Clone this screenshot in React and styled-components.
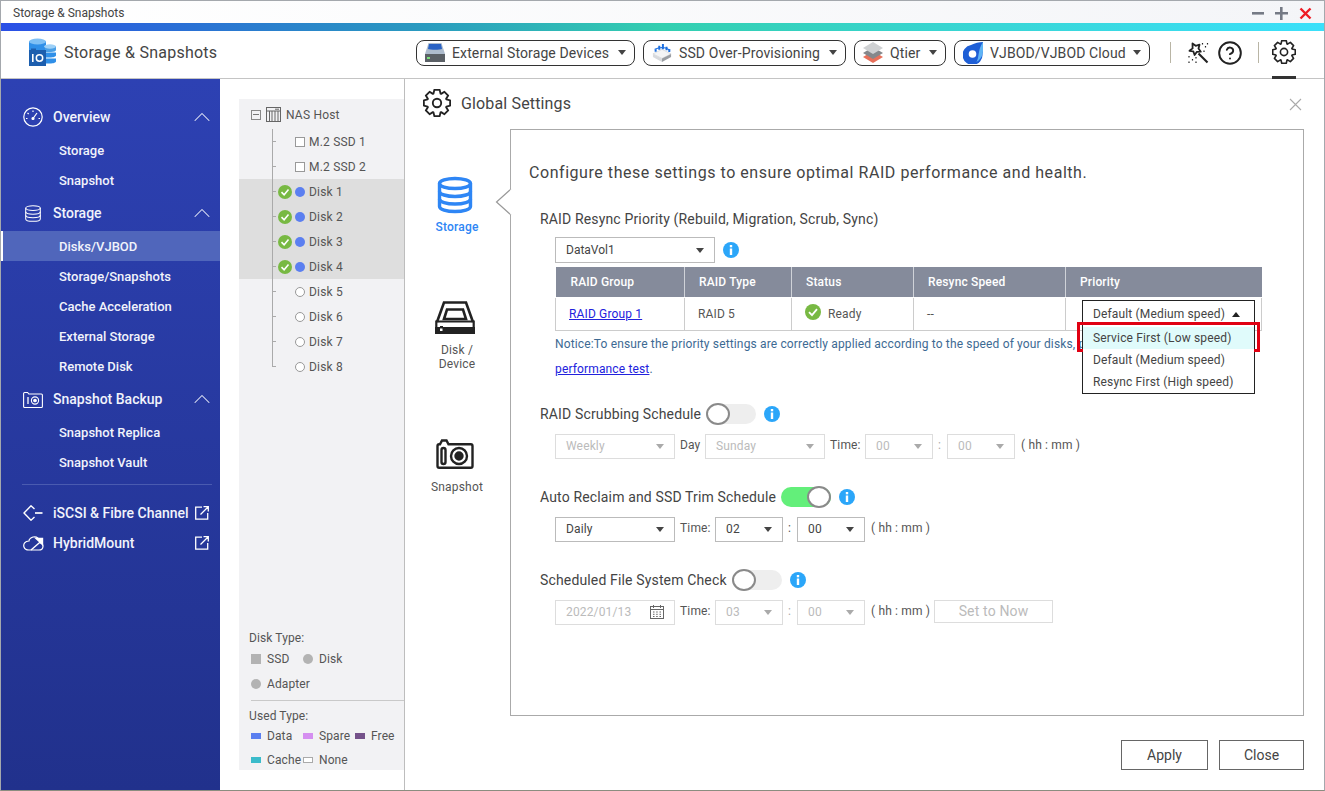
import React from 'react';
import styled, { createGlobalStyle } from 'styled-components';
import { CircleHelp, ChevronUp } from 'lucide-react';

const GlobalStyle = createGlobalStyle`
  html, body { margin: 0; padding: 0; background: #fff; }
  body { font-family: Roboto, "Liberation Sans", sans-serif; color: #333; }
  * { box-sizing: border-box; }
`;

// 8 tooth gear outline, same shape everywhere
const gearPoints = (() => {
  const pts = [];
  for (let i = 0; i < 8; i++) {
    const a = (i * Math.PI) / 4 - Math.PI / 2;
    [[-0.36, 8.6], [-0.2, 11.5], [0.2, 11.5], [0.36, 8.6]].forEach(([d, r]) => {
      pts.push(`${(12 + r * Math.cos(a + d)).toFixed(2)},${(12 + r * Math.sin(a + d)).toFixed(2)}`);
    });
  }
  return pts.join(' ');
})();

const Gear = ({ size, sw = 1.6 }) => (
  <svg width={size} height={size} viewBox="0 0 24 24" fill="none" stroke="#222" strokeWidth={sw} strokeLinejoin="round">
    <polygon points={gearPoints} />
    <circle cx="12" cy="12" r="3.6" />
  </svg>
);

const Logo = () => (
  <svg width="29" height="29" viewBox="0 0 29 29">
    <rect x="1" y="3" width="17" height="11" fill="#2f8fe8" />
    <ellipse cx="9.5" cy="3.5" rx="8.5" ry="3" fill="#7fc0f5" />
    <path d="M17 8h11v4c0 1-2 2-5 2h-6z" fill="#4a9fe6" />
    <path d="M17 14.5h11v3c0 1-3 2-6 2h-5z" fill="#2f8fe8" />
    <path d="M17 20.5h11v3c0 1-3 2-6 2h-5z" fill="#2f8fe8" />
    <ellipse cx="22" cy="8.5" rx="6" ry="2.2" fill="#9dd0f7" />
    <rect x="1" y="12" width="17" height="16" fill="#1c5eae" />
    <rect x="3" y="10.5" width="5" height="2" fill="#1c5eae" />
    <rect x="4" y="16" width="1.6" height="8" fill="#fff" />
    <circle cx="11.5" cy="20" r="3.2" fill="none" stroke="#fff" strokeWidth="1.5" />
  </svg>
);

const DriveIcon = () => (
  <svg width="20" height="19" viewBox="0 0 20 19">
    <path d="M3.500 0h13L20 11v8H0v-8z" fill="#aebccd" />
    <path d="M4 1h12l1 5c-2 1-12 1-14 0z" fill="#2a62c4" />
    <path d="M0 11h20v8H0z" fill="#5b6066" />
    <rect x="2" y="14" width="3" height="2" fill="#7be07b" />
  </svg>
);

const SsdIcon = () => (
  <svg width="20" height="20" viewBox="0 0 22 20">
    <path d="M1 11l10-5 10 5-10 5z" fill="#f4f5f6" stroke="#c5c8cc" strokeWidth=".6" />
    <path d="M1 11v3.500L11 20v-4z" fill="#d8dadd" />
    <path d="M21 11v3.500L11 20v-4z" fill="#9a9ea3" />
    <path d="M4 8.500V6M8 6.500V2M12 6V0M16 7V3M19 9V6" stroke="#1d6fe0" strokeWidth="2.200" />
    <path d="M3 6l4-1.500L11 4l4 .5L20 7" stroke="#1d6fe0" strokeWidth="1.200" fill="none" />
  </svg>
);

const TierIcon = () => (
  <svg width="20" height="21" viewBox="0 0 20 21">
    <path d="M10 9l10 6-10 6-10-6z" fill="#e8705a" />
    <path d="M10 5l10 6-10 6-10-6z" fill="#85888c" />
    <path d="M10 0l10 6-10 6L0 6z" fill="#cfd1d3" />
  </svg>
);

const CloudDiskIcon = () => (
  <svg width="20" height="22" viewBox="0 0 20 22">
    <path d="M20 0c0 4 .5 8-.5 12A10 10 0 1 1 8 3c4-2 8-3 12-3z" fill="#1f5fd6" />
    <path d="M20 0c0 4 .5 8-.5 12-.8 3.500-3 6-6 8 3-5 1-12 6.500-20z" fill="#5fb4f5" />
    <circle cx="9.500" cy="12" r="3.800" fill="#fff" />
  </svg>
);

const WandIcon = () => (
  <svg width="22" height="22" viewBox="0 0 22 22" fill="none" stroke="#222" strokeWidth="1.800" strokeLinejoin="round">
    <path d="M5.500 1.500l3.200 2.300 3.800-1.100-1 3.800 2.300 3.200-3.900.1-2.300 3.200-1.300-3.700L2.500 8.800l3.100-2.400z" />
    <path d="M11.500 11.500l9 9" strokeWidth="2.100" />
    <path d="M15.500 1v1.500M18.500 4v1.500M20.500 1v1.500M17 8.500V10M2 14v1.500M5.500 17v1.500M9 15v1.500M2 19.500V21M9 19.500V21" strokeWidth="1.200" />
  </svg>
);

const GaugeIcon = () => (
  <svg width="20" height="20" viewBox="0 0 20 20" fill="none" stroke="#fff" strokeWidth="1.2">
    <circle cx="10" cy="10" r="9.200" />
    <path d="M10 11.500L14 6M10 3.500v1.500M4.500 6l1.200 1M3 11.500h1.500M15.500 11.500H17" />
    <circle cx="10" cy="11.500" r="1" fill="#fff" />
  </svg>
);

const DbIcon = ({ w, h, color = '#fff', sw = 1.2 }) => (
  <svg width={w} height={h} viewBox="0 0 20 20" fill="none" stroke={color} strokeWidth={sw}>
    <ellipse cx="10" cy="3.600" rx="8.600" ry="2.800" />
    <path d="M1.400 3.600v12.800c0 1.600 3.900 2.800 8.600 2.800s8.600-1.200 8.600-2.800V3.600" />
    <path d="M1.400 8c0 1.600 3.900 2.800 8.600 2.800S18.600 9.600 18.600 8M1.400 12.200c0 1.600 3.900 2.800 8.600 2.800s8.600-1.200 8.600-2.800" />
  </svg>
);

const BackupIcon = () => (
  <svg width="20" height="17" viewBox="0 0 20 17" fill="none" stroke="#fff" strokeWidth="1.100">
    <path d="M.6 15.500V2.500c0-.6.400-1 1-1h3l1.200 1.500h12.600c.6 0 1 .4 1 1v11.500c0 .6-.4 1-1 1H1.600c-.6 0-1-.4-1-1z" />
    <path d="M5 6v7" strokeWidth="1.300" />
    <circle cx="12" cy="9.500" r="3.600" />
    <circle cx="12" cy="9.500" r="1.300" fill="#fff" />
  </svg>
);

const IscsiIcon = () => (
  <svg width="20" height="16" viewBox="0 0 20 16" fill="none" stroke="#fff" strokeWidth="1.400">
    <path d="M11.500 4L8 .8 1 8l7 7.200 3.500-3.200" />
    <path d="M12 8h7.500" strokeWidth="1.700" />
  </svg>
);

const CloudIcon = () => (
  <svg width="21" height="16" viewBox="0 0 21 16" fill="none" stroke="#fff" strokeWidth="1.200">
    <path d="M6 15h10c5 0 5-6 1.500-7C17 4 14 1 10 2 7 3 6 5 6 6 2 6 0 9 1 12c.6 2 2.500 3 5 3z" />
    <path d="M8 15l11-9.500M13 3.500l6.500 0v6z" fill="#fff" strokeWidth="1.400" />
  </svg>
);

const OpenIcon = () => (
  <svg width="14" height="14" viewBox="0 0 14 14" fill="none" stroke="#fff" strokeWidth="1.300">
    <path d="M7 1.200H.7v12h12V7M5.500 8.500L13 1M8.500.7h4.800v4.800" />
  </svg>
);

const DiskBig = () => (
  <svg width="40" height="33" viewBox="0 0 40 33" fill="none" stroke="#222" strokeWidth="2.600">
    <path d="M2 21L9 1.500h22L38 21" />
    <path d="M9 18l3-9.500h16l3 9.500z" />
    <path d="M1.300 20.500h37.400v11.200H1.300z" strokeWidth="2.200" />
    <rect x="0" y="26" width="40" height="7" fill="#222" stroke="none" />
    <rect x="5" y="25" width="3" height="3" fill="#222" stroke="none" />
    <rect x="5" y="27.500" width="2.500" height="2.500" fill="#fff" stroke="none" />
  </svg>
);

const CameraBig = () => (
  <svg width="38" height="31" viewBox="0 0 38 31" fill="none" stroke="#222" strokeWidth="2.400">
    <path d="M1.500 27V7c0-1 .8-1.700 1.700-1.700h.8L6 1.500h4.500l2 3.800h22.300c1 0 1.700.8 1.700 1.700v20c0 1-.8 1.800-1.700 1.800H3.200c-.9 0-1.700-.8-1.700-1.800z" />
    <rect x="5.500" y="9" width="4" height="16" rx="2" />
    <circle cx="23" cy="17" r="8" />
    <circle cx="23" cy="17" r="3.500" fill="#222" />
  </svg>
);

const InfoIcon = () => (
  <InfoWrap viewBox="0 0 16 16" width="16" height="16">
    <circle cx="8" cy="8" r="8" fill="#2ba6f9" />
    <rect x="6.800" y="3" width="2.400" height="2.300" fill="#fff" />
    <rect x="6.800" y="6.500" width="2.400" height="6.500" fill="#fff" />
  </InfoWrap>
);

const OkIcon = ({ size }) => (
  <svg width={size} height={size} viewBox="0 0 16 16">
    <circle cx="8" cy="8" r="8" fill="#78b943" />
    <path d="M4 8.200l3 3 5-6" fill="none" stroke="#fff" strokeWidth="1.800" />
  </svg>
);

const NasIcon = () => (
  <svg width="15" height="15" viewBox="0 0 15 15" fill="none" stroke="#666" strokeWidth="1">
    <rect x=".5" y=".5" width="14" height="14" />
    <path d="M.5 4h14M3.500 4v10.500M6 4v10.500M9 4v10.500M12 4v10.500M9 2.200h4" />
  </svg>
);

const CalendarIcon = () => (
  <svg width="14" height="14" viewBox="0 0 14 14" fill="none" stroke="#666" strokeWidth="1">
    <rect x=".5" y="1.500" width="13" height="12" />
    <path d="M.5 4.500h13M3.500 0v3M10.500 0v3" />
    <path d="M3 7h1.500M6.200 7h1.500M9.500 7H11M3 9.300h1.500M6.200 9.300h1.500M9.500 9.300H11M3 11.500h1.500M6.200 11.500h1.500M9.500 11.500H11" />
  </svg>
);

const Arrow = styled.span`
  width: 0;
  height: 0;
  border-left: 4px solid transparent;
  border-right: 4px solid transparent;
  border-${p => (p.$up ? 'bottom' : 'top')}: 5px solid ${p => p.$color || '#444'};
`;

const Window = styled.div`
  width: 1325px;
  height: 791px;
  border: 1px solid #a4a8ad;
  border-bottom-color: #8b8d80;
  display: flex;
  flex-direction: column;
  overflow: hidden;
  background: #fff;
`;

const TitleBar = styled.div`
  height: 22px;
  flex: none;
  background: linear-gradient(90deg, #fff, #f4f5f8);
  display: flex;
  align-items: center;
  padding: 2px 12px 0 12px;
  font-size: 12px;
  color: #444;
`;

const WinControls = styled.div`
  margin-left: auto;
  display: flex;
  gap: 11px;
`;

const ColorBar = styled.div`
  height: 8px;
  flex: none;
  background: linear-gradient(90deg, #2a4fe6 0%, #2a9bbf 32%, #33cfb0 50%, #39d6d6 75%, #3be0fa 100%);
`;

const Header = styled.header`
  height: 48px;
  flex: none;
  display: flex;
  align-items: center;
  padding: 0 28px 4px 27px;
  border-bottom: 1px solid #c4c4c4;
`;

const AppName = styled.div`
  font-size: 16px;
  letter-spacing: 0.25px;
  color: #444;
  margin-left: 7px;
`;

const Pills = styled.div`
  margin-left: auto;
  display: flex;
  gap: 8px;
`;

const Pill = styled.div`
  width: ${p => p.$w}px;
  height: 26px;
  border: 1px solid #333;
  border-radius: 8px;
  display: flex;
  align-items: center;
  padding: 0 8px;
  gap: 7px;
  font-size: 14px;
  letter-spacing: 0.12px;
  color: #444;
  white-space: nowrap;
  span:last-child { margin-left: auto; }
`;

const Sep = styled.div`
  width: 1px;
  height: 21px;
  background: #b9b5a5;
  margin: 0 ${p => p.$r}px 0 ${p => p.$l}px;
`;

const ToolIcon = styled.div`
  display: flex;
  margin-right: ${p => p.$r || 0}px;
`;

const ToolGear = styled.div`
  height: 47px;
  display: flex;
  align-items: center;
  border-bottom: 3px solid #333;
  margin: 0 0 -5px;
  padding-bottom: 3px;
`;

const Body = styled.div`
  flex: 1;
  display: flex;
  min-height: 0;
`;

const Sidebar = styled.nav`
  width: 219px;
  flex: none;
  background: linear-gradient(180deg, #2d41b3 0%, #21318c 100%);
  padding-top: 22px;
  color: #f1f3fb;
`;

const NavHead = styled.div`
  height: 32px;
  display: flex;
  align-items: center;
  padding: 0 11px 0 22px;
  font-size: 14px;
  font-weight: 500;
  margin-bottom: 2px;
`;

const NavIcon = styled.div`
  width: 30px;
  display: flex;
  flex: none;
`;

const NavEnd = styled.div`
  margin-left: auto;
  display: flex;
`;

const ChevronEnd = styled(NavEnd)`
  margin-right: -7px;
`;

const NavItem = styled.div`
  height: 30px;
  display: flex;
  align-items: center;
  font-size: 13px;
  font-weight: 500;
  background: ${p => (p.$active ? '#5066bb' : 'transparent')};
  border-left: ${p => (p.$active ? '2px solid #fff' : '0')};
  padding-left: ${p => (p.$active ? 56 : 58)}px;
`;

const NavGroup = styled.div`
  margin-bottom: 2px;
`;

const NavDivider = styled.div`
  height: 1px;
  background: #4a5bb0;
  margin: 7px 8px 13px 21px;
`;

const NavPlain = styled(NavHead)`
  height: 30px;
  margin-bottom: 0;
`;

const TreeColumn = styled.div`
  width: 185px;
  flex: none;
  padding: 20px 0 20px 19px;
  border-right: 1px solid #bdbdbd;
  display: flex;
`;

const TreePanel = styled.div`
  flex: 1;
  min-width: 0;
  background: #f2f2f4;
  display: flex;
  flex-direction: column;
  font-size: 12px;
  color: #555;
`;

const TreeRoot = styled.div`
  height: 30px;
  display: flex;
  align-items: center;
  padding: 1px 0 0 12px;
  letter-spacing: 0.2px;
`;

const RootName = styled.span`
  margin-left: 5px;
`;

const Collapse = styled.div`
  width: 10px;
  height: 10px;
  border: 1px solid #888;
  margin-right: 5px;
  position: relative;
  &::after {
    content: '';
    position: absolute;
    left: 1px;
    right: 1px;
    top: 3px;
    height: 1px;
    background: #777;
  }
`;

const TreeRow = styled.div`
  height: 25px;
  display: flex;
  align-items: center;
  padding-left: 39px;
  letter-spacing: 0.2px;
  position: relative;
  background: ${p => (p.$used ? '#dedede' : 'transparent')};
  &::before {
    content: '';
    position: absolute;
    left: 33px;
    top: 0;
    bottom: ${p => (p.$last ? 12 : 0)}px;
    width: 1px;
    background: #aaa;
  }
  &::after {
    content: '';
    position: absolute;
    left: 33px;
    top: 12px;
    width: 4px;
    height: 1px;
    background: #aaa;
  }
`;

const CheckSlot = styled.div`
  width: 17px;
  flex: none;
  display: flex;
  position: relative;
  z-index: 1;
`;

const Marker = styled.div`
  width: 10px;
  height: 10px;
  flex: none;
  margin-right: 4px;
  border-radius: ${p => (p.$square ? 0 : '50%')};
  background: ${p => p.$color || '#fff'};
  border: ${p => (p.$color ? 'none' : '1px solid #999')};
`;

const Legend = styled.div`
  margin: auto 0 -2px;
`;

const LegendBlock = styled.div`
  padding: ${p => p.$pad};
  border-bottom: ${p => (p.$line ? '1px solid #c9c9c9' : 'none')};
  margin-left: ${p => (p.$line ? 12 : 0)}px;
`;

const LegendTitle = styled.div`
  height: 15px;
  line-height: 15px;
  margin-left: ${p => p.$ml || 0}px;
  letter-spacing: 0.1px;
`;

const LegendGrid = styled.div`
  display: grid;
  grid-template-columns: 52px 52px 1fr;
  grid-auto-rows: ${p => p.$row}px;
  align-items: center;
  margin-left: ${p => p.$ml || 0}px;
`;

const LegendItem = styled.div`
  display: flex;
  align-items: center;
  gap: 6px;
  letter-spacing: 0.1px;
  white-space: nowrap;
`;

const Swatch = styled.div`
  width: 10px;
  height: ${p => p.$h || 10}px;
  flex: none;
  background: ${p => p.$color};
  border: ${p => (p.$outline ? '1px solid #aaa' : 'none')};
  border-radius: ${p => (p.$round ? '50%' : 0)};
`;

const Dialog = styled.div`
  flex: 1;
  display: flex;
  flex-direction: column;
  min-width: 0;
`;

const DialogTitle = styled.div`
  height: 50px;
  flex: none;
  display: flex;
  align-items: center;
  padding: 0 22px 2px 18px;
  font-size: 16px;
  color: #444;
  gap: 10px;
  letter-spacing: 0.15px;
`;

const CloseX = styled.svg`
  margin-left: auto;
  margin-top: 2px;
`;

const DialogBody = styled.div`
  display: flex;
  height: 587px;
  flex: none;
`;

const Tabs = styled.div`
  width: 105px;
  flex: none;
  padding-top: 47px;
`;

const Tab = styled.div`
  width: 104px;
  display: flex;
  flex-direction: column;
  align-items: center;
  margin-bottom: ${p => p.$mb || 0}px;
  svg { margin-right: 4px; }
`;

const TabLabel = styled.div`
  margin-top: ${p => p.$mt}px;
  font-size: 12px;
  line-height: 14px;
  text-align: center;
  letter-spacing: 0.2px;
  font-weight: ${p => (p.$on ? 500 : 400)};
  color: ${p => (p.$on ? '#2e86f5' : '#555')};
`;

const Box = styled.div`
  width: 794px;
  flex: none;
  border: 1px solid #aaa;
  position: relative;
  padding: 33px 0 0 18px;
`;

const BoxPointer = styled.svg`
  position: absolute;
  left: -16px;
  top: 58px;
`;

const Lead = styled.div`
  font-size: 16px;
  line-height: 20px;
  letter-spacing: 0.55px;
  color: #444;
`;

const Section = styled.section`
  margin: ${p => p.$top}px 0 0 11px;
  position: relative;
`;

const SectionHead = styled.div`
  height: 20px;
  display: flex;
  align-items: center;
  font-size: 14px;
  letter-spacing: 0.15px;
  color: #444;
  white-space: nowrap;
`;

const InfoWrap = styled.svg`
  flex: none;
`;

const Toggle = styled.div`
  width: 50px;
  height: 20px;
  border-radius: 10px;
  background: ${p => (p.$on ? '#63ef7a' : '#eee')};
  margin: 0 8px 0 5px;
  display: flex;
  justify-content: ${p => (p.$on ? 'flex-end' : 'flex-start')};
`;

const Knob = styled.div`
  width: 24px;
  height: 22px;
  margin-top: -1px;
  border-radius: 50%;
  background: #fff;
  border: 2px solid #8a8a8a;
`;

const FieldRow = styled.div`
  display: flex;
  align-items: center;
  gap: 5px;
  margin: 10px 0 0 15px;
  font-size: 12px;
  color: #555;
  letter-spacing: 0.15px;
`;

const Select = styled.div`
  width: ${p => p.$w}px;
  height: ${p => p.$h || 25}px;
  flex: none;
  border: 1px solid ${p => (p.$off ? '#ddd' : '#bbb')};
  color: ${p => (p.$off ? '#bbb' : '#444')};
  display: flex;
  align-items: center;
  justify-content: space-between;
  padding: 0 10px;
`;

const Label = styled.span`
  width: ${p => p.$w}px;
  flex: none;
  white-space: nowrap;
  padding-left: ${p => p.$pl || 0}px;
  margin-top: -2px;
  color: ${p => p.$color || '#555'};
`;

const SetNow = styled.div`
  width: 119px;
  height: 23px;
  margin-top: -2px;
  border: 1px solid #ddd;
  display: flex;
  align-items: center;
  justify-content: center;
  font-size: 14px;
  color: #bbb;
`;

const VolumeRow = styled.div`
  display: flex;
  align-items: center;
  gap: 8px;
  margin: 8px 0 4px 15px;
  font-size: 12px;
`;

const RaidTable = styled.table`
  width: 706px;
  margin-left: 15px;
  border-collapse: collapse;
  table-layout: fixed;
  font-size: 12px;
  color: #555;
  letter-spacing: 0.15px;
  th {
    height: 30px;
    background: #858b9b;
    color: #fff;
    font-weight: 500;
    text-align: left;
    padding: 1px 0 0 14px;
    border-right: 1px solid #cfd2d8;
    border-bottom: 1px solid #fff;
  }
  th:first-child { padding-left: 15px; }
  th:last-child { border-right: 0; }
  td {
    height: 33px;
    padding: 1px 0 0 13px;
    border: 1px solid #ccc;
    position: relative;
  }
`;

const Link = styled.a`
  color: #2222dd;
  text-decoration: underline;
`;

const StatusCell = styled.div`
  display: flex;
  align-items: center;
  gap: 7px;
  svg { margin-top: -4px; }
`;

const Dropdown = styled.div`
  position: absolute;
  left: 16px;
  top: 2px;
  width: 173px;
  height: 94px;
  background: #fff;
  border: 1px solid #222;
  z-index: 2;
  color: #444;
`;

const DropHead = styled.div`
  height: 26px;
  display: flex;
  align-items: center;
  justify-content: space-between;
  padding: 1px 14px 0 10px;
`;

const DropOption = styled.div`
  height: 22px;
  display: flex;
  align-items: center;
  padding: 1px 0 0 10px;
  position: relative;
  background: ${p => (p.$mark ? '#e0fbfb' : '#fff')};
  &::after {
    content: '';
    display: ${p => (p.$mark ? 'block' : 'none')};
    position: absolute;
    left: -6px;
    right: -6px;
    top: -5px;
    bottom: -3px;
    border: 3px solid #e00012;
  }
`;

const Notice = styled.div`
  margin: 1px 0 0 15px;
  font-size: 12px;
  line-height: 25px;
  letter-spacing: 0.15px;
  color: #3d6a93;
  white-space: nowrap;
`;

const Footer = styled.div`
  flex: 1;
  display: flex;
  justify-content: flex-end;
  align-items: flex-start;
  gap: 11px;
  padding: 24px 20px 0 0;
`;

const Button = styled.div`
  width: ${p => p.$w}px;
  height: 30px;
  border: 1px solid #666;
  display: flex;
  align-items: center;
  justify-content: center;
  font-size: 14px;
  color: #444;
`;

const Chevron = () => (
  <ChevronEnd><ChevronUp size={28} color="#e6e9f7" strokeWidth={0.9} /></ChevronEnd>
);

const disks = [
  { name: 'M.2 SSD 1', square: true },
  { name: 'M.2 SSD 2', square: true },
  { name: 'Disk 1', used: true },
  { name: 'Disk 2', used: true },
  { name: 'Disk 3', used: true },
  { name: 'Disk 4', used: true },
  { name: 'Disk 5' },
  { name: 'Disk 6' },
  { name: 'Disk 7' },
  { name: 'Disk 8' },
];

function App() {
  return (
    <Window>
      <GlobalStyle />
      <TitleBar>
        Storage &amp; Snapshots
        <WinControls>
          <svg width="13" height="13" viewBox="0 0 13 13"><rect x="1" y="5" width="12" height="2.600" fill="#757a85" /></svg>
          <svg width="13" height="13" viewBox="0 0 13 13"><path d="M0 5h5V0h2.600v5H13v2.600H7.600V13H5V7.600H0z" fill="#757a85" /></svg>
          <svg width="13" height="13" viewBox="0 0 13 13"><path d="M1.500 1.500l10 10M11.500 1.500l-10 10" stroke="#ee1c25" strokeWidth="2.400" /></svg>
        </WinControls>
      </TitleBar>
      <ColorBar />
      <Header>
        <Logo />
        <AppName>Storage &amp; Snapshots</AppName>
        <Pills>
          <Pill $w={219}><DriveIcon />External Storage Devices<Arrow /></Pill>
          <Pill $w={203}><SsdIcon />SSD Over-Provisioning<Arrow /></Pill>
          <Pill $w={92}><TierIcon />Qtier<Arrow /></Pill>
          <Pill $w={196}><CloudDiskIcon />VJBOD/VJBOD Cloud<Arrow /></Pill>
        </Pills>
        <Sep $l={20} $r={16} />
        <ToolIcon $r={8}><WandIcon /></ToolIcon>
        <ToolIcon><CircleHelp size={26} color="#222" strokeWidth={1.8} /></ToolIcon>
        <Sep $l={15} $r={13} />
        <ToolGear><Gear size={24} /></ToolGear>
      </Header>
      <Body>
        <Sidebar>
          <NavGroup>
            <NavHead><NavIcon><GaugeIcon /></NavIcon>Overview<Chevron /></NavHead>
            <NavItem>Storage</NavItem>
            <NavItem>Snapshot</NavItem>
          </NavGroup>
          <NavGroup>
            <NavHead><NavIcon><DbIcon w={20} h={17} /></NavIcon>Storage<Chevron /></NavHead>
            <NavItem $active>Disks/VJBOD</NavItem>
            <NavItem>Storage/Snapshots</NavItem>
            <NavItem>Cache Acceleration</NavItem>
            <NavItem>External Storage</NavItem>
            <NavItem>Remote Disk</NavItem>
          </NavGroup>
          <NavGroup>
            <NavHead><NavIcon><BackupIcon /></NavIcon>Snapshot Backup<Chevron /></NavHead>
            <NavItem>Snapshot Replica</NavItem>
            <NavItem>Snapshot Vault</NavItem>
          </NavGroup>
          <NavDivider />
          <NavPlain><NavIcon><IscsiIcon /></NavIcon>iSCSI &amp; Fibre Channel<NavEnd><OpenIcon /></NavEnd></NavPlain>
          <NavPlain><NavIcon><CloudIcon /></NavIcon>HybridMount<NavEnd><OpenIcon /></NavEnd></NavPlain>
        </Sidebar>

        <TreeColumn>
          <TreePanel>
            <TreeRoot>
              <Collapse />
              <NasIcon />
              <RootName>NAS Host</RootName>
            </TreeRoot>
            {disks.map((d, i) => (
              <TreeRow key={d.name} $used={d.used} $last={i === disks.length - 1}>
                <CheckSlot>{d.used && <OkIcon size={14} />}</CheckSlot>
                <Marker $square={d.square} $color={d.used ? '#5b7ff0' : undefined} />
                {d.name}
              </TreeRow>
            ))}
            <Legend>
              <LegendBlock $line $pad="0 0 4px 0">
                <LegendTitle $ml={-2}>Disk Type:</LegendTitle>
                <LegendGrid $row={25}>
                  <LegendItem><Swatch $color="#b3b3b3" />SSD</LegendItem>
                  <LegendItem><Swatch $color="#b3b3b3" $round />Disk</LegendItem>
                  <span />
                  <LegendItem><Swatch $color="#b3b3b3" $round />Adapter</LegendItem>
                </LegendGrid>
              </LegendBlock>
              <LegendBlock $pad="8px 0 0 0">
                <LegendTitle $ml={10}>Used Type:</LegendTitle>
                <LegendGrid $row={24} $ml={12}>
                  <LegendItem><Swatch $h={6} $color="#5b7ff0" />Data</LegendItem>
                  <LegendItem><Swatch $h={6} $color="#d58ff0" />Spare</LegendItem>
                  <LegendItem><Swatch $h={6} $color="#75528a" />Free</LegendItem>
                  <LegendItem><Swatch $h={6} $color="#3cbccb" />Cache</LegendItem>
                  <LegendItem><Swatch $h={6} $color="#fff" $outline />None</LegendItem>
                </LegendGrid>
              </LegendBlock>
            </Legend>
          </TreePanel>
        </TreeColumn>

        <Dialog>
          <DialogTitle>
            <Gear size={28} />
            Global Settings
            <CloseX width="13" height="13" viewBox="0 0 13 13">
              <path d="M1 1l11 11M12 1L1 12" stroke="#aaa" strokeWidth="1.100" />
            </CloseX>
          </DialogTitle>
          <DialogBody>
            <Tabs>
              <Tab $mb={67}>
                <DbIcon w={36} h={38} color="#2e86f5" sw={1.900} />
                <TabLabel $mt={6} $on>Storage</TabLabel>
              </Tab>
              <Tab $mb={68}>
                <DiskBig />
                <TabLabel $mt={9}>Disk /<br />Device</TabLabel>
              </Tab>
              <Tab>
                <CameraBig />
                <TabLabel $mt={10}>Snapshot</TabLabel>
              </Tab>
            </Tabs>
            <Box>
              <BoxPointer width="17" height="28" viewBox="0 0 17 28">
                <path d="M16 1L1.500 14 16 27" fill="#fff" stroke="#999" strokeWidth="1.200" />
                <rect x="15.400" y="1.500" width="2" height="25" fill="#fff" />
              </BoxPointer>
              <Lead>Configure these settings to ensure optimal RAID performance and health.</Lead>
              <Section $top={26}>
                <SectionHead>RAID Resync Priority (Rebuild, Migration, Scrub, Sync)</SectionHead>
                <VolumeRow>
                  <Select $w={160} $h={26}>DataVol1<Arrow /></Select>
                  <InfoIcon />
                </VolumeRow>
                <RaidTable>
                  <colgroup>
                    <col width="129" /><col width="107" /><col width="122" /><col width="152" /><col width="196" />
                  </colgroup>
                  <thead>
                    <tr><th>RAID Group</th><th>RAID Type</th><th>Status</th><th>Resync Speed</th><th>Priority</th></tr>
                  </thead>
                  <tbody>
                    <tr>
                      <td><Link href="#raid">RAID Group 1</Link></td>
                      <td>RAID 5</td>
                      <td><StatusCell><OkIcon size={16} />Ready</StatusCell></td>
                      <td>--</td>
                      <td>
                        <Dropdown>
                          <DropHead>Default (Medium speed)<Arrow $up $color="#222" /></DropHead>
                          <DropOption $mark>Service First (Low speed)</DropOption>
                          <DropOption>Default (Medium speed)</DropOption>
                          <DropOption>Resync First (High speed)</DropOption>
                        </Dropdown>
                      </td>
                    </tr>
                  </tbody>
                </RaidTable>
                <Notice>
                  Notice:To ensure the priority settings are correctly applied according to the speed of your disks, p
                  <br />
                  <Link href="#test">performance test</Link>.
                </Notice>
              </Section>

              <Section $top={22}>
                <SectionHead>RAID Scrubbing Schedule<Toggle><Knob /></Toggle><InfoIcon /></SectionHead>
                <FieldRow>
                  <Select $w={120} $off>Weekly<Arrow $color="#aaa" /></Select>
                  <Label $w={20}>Day</Label>
                  <Select $w={120} $off>Sunday<Arrow $color="#aaa" /></Select>
                  <Label $w={30}>Time:</Label>
                  <Select $w={68} $off>00<Arrow $color="#aaa" /></Select>
                  <Label $w={4} $color="#aaa">:</Label>
                  <Select $w={68} $off>00<Arrow $color="#aaa" /></Select>
                  <Label $w={59} $pl={1}>( hh : mm )</Label>
                </FieldRow>
              </Section>

              <Section $top={28}>
                <SectionHead>Auto Reclaim and SSD Trim Schedule<Toggle $on><Knob /></Toggle><InfoIcon /></SectionHead>
                <FieldRow>
                  <Select $w={120}>Daily<Arrow /></Select>
                  <Label $w={30}>Time:</Label>
                  <Select $w={68}>02<Arrow /></Select>
                  <Label $w={4}>:</Label>
                  <Select $w={68}>00<Arrow /></Select>
                  <Label $w={59} $pl={1}>( hh : mm )</Label>
                </FieldRow>
              </Section>

              <Section $top={28}>
                <SectionHead>Scheduled File System Check<Toggle><Knob /></Toggle><InfoIcon /></SectionHead>
                <FieldRow>
                  <Select $w={120} $off>2022/01/13<CalendarIcon /></Select>
                  <Label $w={30}>Time:</Label>
                  <Select $w={68} $off>03<Arrow $color="#aaa" /></Select>
                  <Label $w={4} $color="#aaa">:</Label>
                  <Select $w={68} $off>00<Arrow $color="#aaa" /></Select>
                  <Label $w={59} $pl={1}>( hh : mm )</Label>
                  <SetNow>Set to Now</SetNow>
                </FieldRow>
              </Section>
            </Box>
          </DialogBody>
          <Footer>
            <Button $w={87}>Apply</Button>
            <Button $w={85}>Close</Button>
          </Footer>
        </Dialog>
      </Body>
    </Window>
  );
}

export default App;
